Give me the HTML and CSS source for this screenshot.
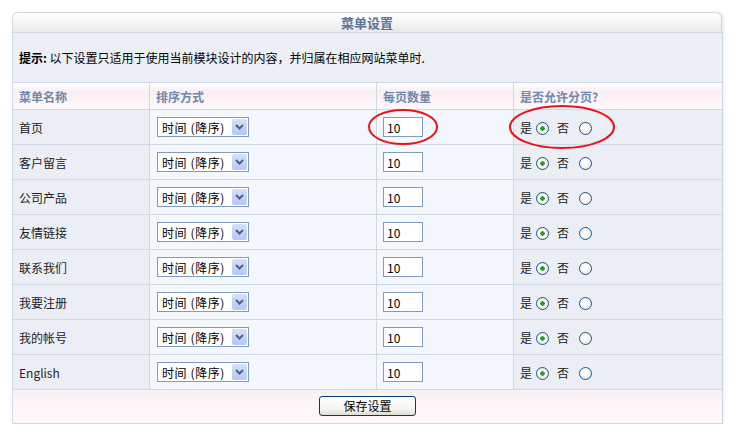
FILE: index.html
```html
<!DOCTYPE html>
<html>
<head>
    <title>菜单设置</title>
    <meta charset="utf-8">
    <link rel="stylesheet" href="styles.css">
</head>
<body>
    <div class="panel">
        <div class="panel-title">菜单设置</div>
        <table class="menu-table">
            <colgroup>
                <col class="c-name">
                <col class="c-sort">
                <col class="c-count">
                <col class="c-page">
            </colgroup>
            <tr class="hint-row">
                <td colspan="4"><b>提示:</b> 以下设置只适用于使用当前模块设计的内容，并归属在相应网站菜单时.</td>
            </tr>
            <tr class="head-row">
                <th>菜单名称</th>
                <th>排序方式</th>
                <th>每页数量</th>
                <th>是否允许分页?</th>
            </tr>
            <tr>
                <td class="name">首页</td>
                <td class="mid"><div class="select-box"><select><option>时间 (降序)</option><option>时间 (升序)</option></select><span class="arrow"><svg width="9" height="6" viewBox="0 0 9 6"><path d="M1 1 L4.5 4.5 L8 1" fill="none" stroke="#4d6185" stroke-width="2"/></svg></span></div></td>
                <td class="mid"><input class="num" type="text" value="10"></td>
                <td class="page">是<input type="radio" name="p1" checked><span class="no">否</span><input type="radio" name="p1"></td>
            </tr>
            <tr>
                <td class="name">客户留言</td>
                <td class="mid"><div class="select-box"><select><option>时间 (降序)</option><option>时间 (升序)</option></select><span class="arrow"><svg width="9" height="6" viewBox="0 0 9 6"><path d="M1 1 L4.5 4.5 L8 1" fill="none" stroke="#4d6185" stroke-width="2"/></svg></span></div></td>
                <td class="mid"><input class="num" type="text" value="10"></td>
                <td class="page">是<input type="radio" name="p2" checked><span class="no">否</span><input type="radio" name="p2"></td>
            </tr>
            <tr>
                <td class="name">公司产品</td>
                <td class="mid"><div class="select-box"><select><option>时间 (降序)</option><option>时间 (升序)</option></select><span class="arrow"><svg width="9" height="6" viewBox="0 0 9 6"><path d="M1 1 L4.5 4.5 L8 1" fill="none" stroke="#4d6185" stroke-width="2"/></svg></span></div></td>
                <td class="mid"><input class="num" type="text" value="10"></td>
                <td class="page">是<input type="radio" name="p3" checked><span class="no">否</span><input type="radio" name="p3"></td>
            </tr>
            <tr>
                <td class="name">友情链接</td>
                <td class="mid"><div class="select-box"><select><option>时间 (降序)</option><option>时间 (升序)</option></select><span class="arrow"><svg width="9" height="6" viewBox="0 0 9 6"><path d="M1 1 L4.5 4.5 L8 1" fill="none" stroke="#4d6185" stroke-width="2"/></svg></span></div></td>
                <td class="mid"><input class="num" type="text" value="10"></td>
                <td class="page">是<input type="radio" name="p4" checked><span class="no">否</span><input type="radio" name="p4"></td>
            </tr>
            <tr>
                <td class="name">联系我们</td>
                <td class="mid"><div class="select-box"><select><option>时间 (降序)</option><option>时间 (升序)</option></select><span class="arrow"><svg width="9" height="6" viewBox="0 0 9 6"><path d="M1 1 L4.5 4.5 L8 1" fill="none" stroke="#4d6185" stroke-width="2"/></svg></span></div></td>
                <td class="mid"><input class="num" type="text" value="10"></td>
                <td class="page">是<input type="radio" name="p5" checked><span class="no">否</span><input type="radio" name="p5"></td>
            </tr>
            <tr>
                <td class="name">我要注册</td>
                <td class="mid"><div class="select-box"><select><option>时间 (降序)</option><option>时间 (升序)</option></select><span class="arrow"><svg width="9" height="6" viewBox="0 0 9 6"><path d="M1 1 L4.5 4.5 L8 1" fill="none" stroke="#4d6185" stroke-width="2"/></svg></span></div></td>
                <td class="mid"><input class="num" type="text" value="10"></td>
                <td class="page">是<input type="radio" name="p6" checked><span class="no">否</span><input type="radio" name="p6"></td>
            </tr>
            <tr>
                <td class="name">我的帐号</td>
                <td class="mid"><div class="select-box"><select><option>时间 (降序)</option><option>时间 (升序)</option></select><span class="arrow"><svg width="9" height="6" viewBox="0 0 9 6"><path d="M1 1 L4.5 4.5 L8 1" fill="none" stroke="#4d6185" stroke-width="2"/></svg></span></div></td>
                <td class="mid"><input class="num" type="text" value="10"></td>
                <td class="page">是<input type="radio" name="p7" checked><span class="no">否</span><input type="radio" name="p7"></td>
            </tr>
            <tr>
                <td class="name">English</td>
                <td class="mid"><div class="select-box"><select><option>时间 (降序)</option><option>时间 (升序)</option></select><span class="arrow"><svg width="9" height="6" viewBox="0 0 9 6"><path d="M1 1 L4.5 4.5 L8 1" fill="none" stroke="#4d6185" stroke-width="2"/></svg></span></div></td>
                <td class="mid"><input class="num" type="text" value="10"></td>
                <td class="page">是<input type="radio" name="p8" checked><span class="no">否</span><input type="radio" name="p8"></td>
            </tr>
            <tr class="foot-row">
                <td colspan="4"><button type="button">保存设置</button></td>
            </tr>
        </table>

        <!-- red marks around the first row's count box and paging choice -->
        <svg class="marks" width="736" height="438" viewBox="0 0 736 438">
            <ellipse cx="403" cy="127" rx="34" ry="17" fill="none" stroke="#e8141c" stroke-width="2"/>
            <ellipse cx="562" cy="127" rx="52" ry="21" fill="none" stroke="#e8141c" stroke-width="2"/>
        </svg>
    </div>
</body>
</html>
```

FILE: styles.css
```css
body {
    margin: 0;
    background-color: #fff;
    font-family: "Noto Sans CJK SC", "DejaVu Sans", sans-serif;
    font-size: 12px;
    color: #222;
}

.panel {
    width: 710px;
    margin: 12px 0 0 12px;
    box-shadow: 2px 0 2px rgba(0, 0, 0, 0.08);
    border-radius: 6px 6px 0 0;
}

.panel-title {
    height: 19px;
    line-height: 19px;
    border: 1px solid #d6d6d6;
    border-bottom: none;
    border-radius: 6px 6px 0 0;
    background: linear-gradient(#ffffff, #f6f6f6 45%, #e9e9e9);
    text-align: center;
    font-size: 13px;
    font-weight: bold;
    color: #5b7398;
}

.menu-table {
    width: 710px;
    border-collapse: collapse;
    table-layout: fixed;
}

.c-name { width: 137px; }
.c-sort { width: 227px; }
.c-count { width: 137px; }
.c-page { width: 209px; }

.menu-table td,
.menu-table th {
    border: 1px solid #cdd9e6;
    height: 34px;
    padding: 0 6px;
    text-align: left;
    vertical-align: middle;
}

.hint-row td {
    height: 49px;
    background-color: #ecf0f6;
    color: #000;
}

.head-row th {
    height: 26px;
    background: linear-gradient(#ffffff, #f9eef2 30%, #fff8fb);
    color: #6d88aa;
    font-weight: bold;
}

.name {
    background-color: #ebeff5;
}

.mid {
    background-color: #f4f8fc;
}

.page {
    background-color: #ebeff5;
}

.select-box {
    position: relative;
    width: 92px;
    height: 20px;
    margin-left: 1px;
}

.select-box select {
    appearance: none;
    -webkit-appearance: none;
    width: 92px;
    height: 20px;
    border: 1px solid #7f9db9;
    border-radius: 0;
    background-color: #fff;
    padding: 0 0 0 4px;
    font-family: inherit;
    font-size: 12px;
    letter-spacing: 0.6px;
    color: #000;
}

.arrow {
    position: absolute;
    top: 2px;
    right: 2px;
    width: 15px;
    height: 16px;
    border-radius: 2px;
    background: linear-gradient(#d4e0fb, #b5c8f4);
    display: flex;
    align-items: center;
    justify-content: center;
    pointer-events: none;
}

.num {
    width: 40px;
    height: 20px;
    box-sizing: border-box;
    border: 1px solid #7f9db9;
    padding: 0 3px;
    font-family: inherit;
    font-size: 12px;
    color: #000;
    margin: 0;
}

.page input[type="radio"] {
    appearance: none;
    -webkit-appearance: none;
    width: 13px;
    height: 13px;
    margin: 0 0 0 4px;
    border: 1px solid #1f5488;
    border-radius: 50%;
    background: radial-gradient(circle at 40% 40%, #ffffff 30%, #dcdcd6);
    vertical-align: -2px;
    box-sizing: border-box;
}

.page input[type="radio"]:checked {
    background: radial-gradient(circle, #21a121 0 2px, #ffffff 2.5px, #dedcd5);
}

.page .no {
    margin: 0 6px 0 8px;
}

.foot-row td {
    height: 33px;
    background: linear-gradient(#f5eff1, #fdf6f9 30%, #fff8fc);
    text-align: center;
}

button {
    width: 97px;
    height: 20px;
    border: 1px solid #003c74;
    border-radius: 3px;
    background: linear-gradient(#ffffff, #f3f3ee 70%, #dcdcd0);
    font-family: inherit;
    font-size: 12px;
    color: #000;
    padding: 0;
    margin-top: -2px;
}

.marks {
    position: absolute;
    left: 0;
    top: 0;
    pointer-events: none;
}
```
